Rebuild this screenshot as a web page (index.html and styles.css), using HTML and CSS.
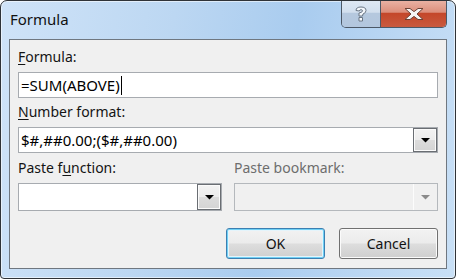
FILE: index.html
```html
<!DOCTYPE html>
<html>
<head>
<meta charset="utf-8">
<link rel="stylesheet" href="styles.css">
</head>
<body>
<div class="window">
  <div class="titlebar">
    <span class="title">Formula</span>
    <div class="caption">
      <div class="cap-help">
        <svg width="12" height="16" viewBox="0 0 12 16"><path d="M1 4.5 Q1 1 6 1 Q11 1 11 4.5 Q11 7 8 8 L7.5 10 L4 10 L4 7 Q7.5 6.5 7.5 4.8 Q7.5 3.7 6 3.7 Q4.5 3.7 4.4 5 Z M4 11.5 L7.5 11.5 L7.5 15 L4 15 Z" fill="#f4f7fb" stroke="#6a7684" stroke-width="1" stroke-linejoin="round"/></svg>
      </div>
      <div class="cap-close">
        <svg width="20" height="12" viewBox="0 0 20 12"><path d="M1 0.5 L6 0.5 L10 3.6 L14 0.5 L19 0.5 L13 6 L19 11.5 L14 11.5 L10 8.4 L6 11.5 L1 11.5 L7 6 Z" fill="#f5f5f5" stroke="#6b4236" stroke-width="1" stroke-linejoin="round"/></svg>
      </div>
    </div>
  </div>
  <div class="client">
    <div class="lbl"><u>F</u>ormula:</div>
    <div class="textbox"><span>=SUM(ABOVE)</span><span class="caret"></span></div>
    <div class="lbl gap2"><u>N</u>umber format:</div>
    <div class="combo"><span class="combo-text">$#,##0.00;($#,##0.00)</span><span class="dd"><svg width="9" height="5" viewBox="0 0 9 5"><path d="M0 0 H9 L4.5 4.5 Z" fill="#000"/></svg></span></div>
    <div class="pair">
      <div class="col">
        <div class="lbl">Paste f<u>u</u>nction:</div>
        <div class="combo tall"><span class="combo-text"></span><span class="dd"><svg width="9" height="5" viewBox="0 0 9 5"><path d="M0 0 H9 L4.5 4.5 Z" fill="#000"/></svg></span></div>
      </div>
      <div class="col disabled">
        <div class="lbl">Paste bookmark:</div>
        <div class="combo tall"><span class="combo-text"></span><span class="dd"><svg width="9" height="5" viewBox="0 0 9 5"><path d="M0 0 H9 L4.5 4.5 Z" fill="#8a8a8a"/></svg></span></div>
      </div>
    </div>
    <div class="buttons">
      <div class="btn default">OK</div>
      <div class="btn">Cancel</div>
    </div>
  </div>
</div>
</body>
</html>
```
FILE: styles.css
```css
html, body {
  margin: 0;
  padding: 0;
  background: #ffffff;
}
.window {
  box-sizing: border-box;
  width: 456px;
  height: 279px;
  border: 1px solid #2f3338;
  border-radius: 7px 7px 4px 4px;
  padding: 0 8px 9px 8px;
  display: flex;
  flex-direction: column;
  background: linear-gradient(100deg, #cfe3f8 0%, #bcd7f2 35%, #a9ccef 60%, #bed9f4 85%, #c9e0f6 100%);
  box-shadow: inset 0 0 0 1px rgba(255,255,255,0.55);
  font-family: "Noto Sans", sans-serif;
  overflow: hidden;
}
.titlebar {
  height: 38px;
  display: flex;
  align-items: flex-start;
}
.title {
  font-size: 15px;
  line-height: 20px;
  margin-top: 8px;
  padding-left: 1px;
  color: #111;
}
.caption {
  margin-left: auto;
  margin-top: -1px;
  display: flex;
  height: 27px;
  border: 1px solid #4c5866;
  border-top: none;
  border-radius: 0 0 5px 5px;
  overflow: hidden;
}
.cap-help {
  width: 38px;
  border-right: 1px solid #4c5866;
  background: linear-gradient(#dfe8f3 0%, #d2dfee 45%, #b5c8de 50%, #b3c7de 100%);
  display: flex;
  align-items: center;
  justify-content: center;
}
.cap-close {
  width: 65px;
  background: linear-gradient(#eab4a6 0%, #dc8f7c 45%, #c4472a 50%, #c95a3f 100%);
  display: flex;
  align-items: center;
  justify-content: center;
}
.client {
  flex: 1;
  border: 1px solid #6f7780;
  background: #f0f0f0;
  padding: 8px 8px 9px 8px;
  display: flex;
  flex-direction: column;
}
.lbl {
  font-size: 14px;
  line-height: 18px;
  height: 18px;
  color: #141414;
  margin-bottom: 6px;
}
.lbl u {
  text-decoration-thickness: 1px;
  text-underline-offset: 2px;
}
.gap2 {
  margin-top: 5px;
}
.textbox {
  box-sizing: border-box;
  height: 26px;
  border: 1px solid #a7abb0;
  background: #fff;
  font-size: 15px;
  line-height: 24px;
  padding-left: 2px;
  display: flex;
  align-items: center;
  color: #000;
}
.caret {
  width: 1px;
  height: 19px;
  background: #000;
  margin-left: 1px;
}
.combo {
  box-sizing: border-box;
  height: 26px;
  border: 1px solid #a7abb0;
  background: #fff;
  display: flex;
  align-items: stretch;
}
.combo-text {
  flex: 1;
  font-size: 15px;
  line-height: 24px;
  padding-left: 2px;
  color: #000;
  white-space: nowrap;
}
.dd {
  box-sizing: border-box;
  width: 24px;
  border: 1px solid #6a6e73;
  box-shadow: inset 0 0 0 1px #fbfbfb;
  background: linear-gradient(#f3f3f3 0%, #ececec 48%, #dcdcdc 52%, #d4d4d4 100%);
  display: flex;
  align-items: center;
  justify-content: center;
}
.pair {
  display: flex;
  gap: 12px;
  margin-top: 6px;
}
.col {
  flex: 1;
  display: flex;
  flex-direction: column;
}
.combo.tall {
  height: 28px;
}
.disabled .lbl {
  color: #6d6d6d;
}
.disabled .combo {
  background: #f0f0f0;
  border-color: #b4b8bc;
}
.disabled .dd {
  border: none;
  border-left: 1px solid #fcfcfc;
  box-shadow: none;
  background: #f0f0f0;
}
.buttons {
  margin-top: 17px;
  display: flex;
  justify-content: flex-end;
  gap: 14px;
}
.btn {
  box-sizing: border-box;
  width: 99px;
  height: 31px;
  border: 1px solid #707070;
  border-radius: 3px;
  box-shadow: inset 0 0 0 1px #fbfbfb;
  background: linear-gradient(#f2f2f2 0%, #ebebeb 48%, #dddddd 52%, #cfcfcf 100%);
  font-size: 14px;
  line-height: 29px;
  text-align: center;
  color: #111;
}
.btn.default {
  border-color: #3c7fb1;
  box-shadow: inset 0 0 0 1px #6fd0f5, inset 0 0 0 2px #e4f4fb;
}
```
